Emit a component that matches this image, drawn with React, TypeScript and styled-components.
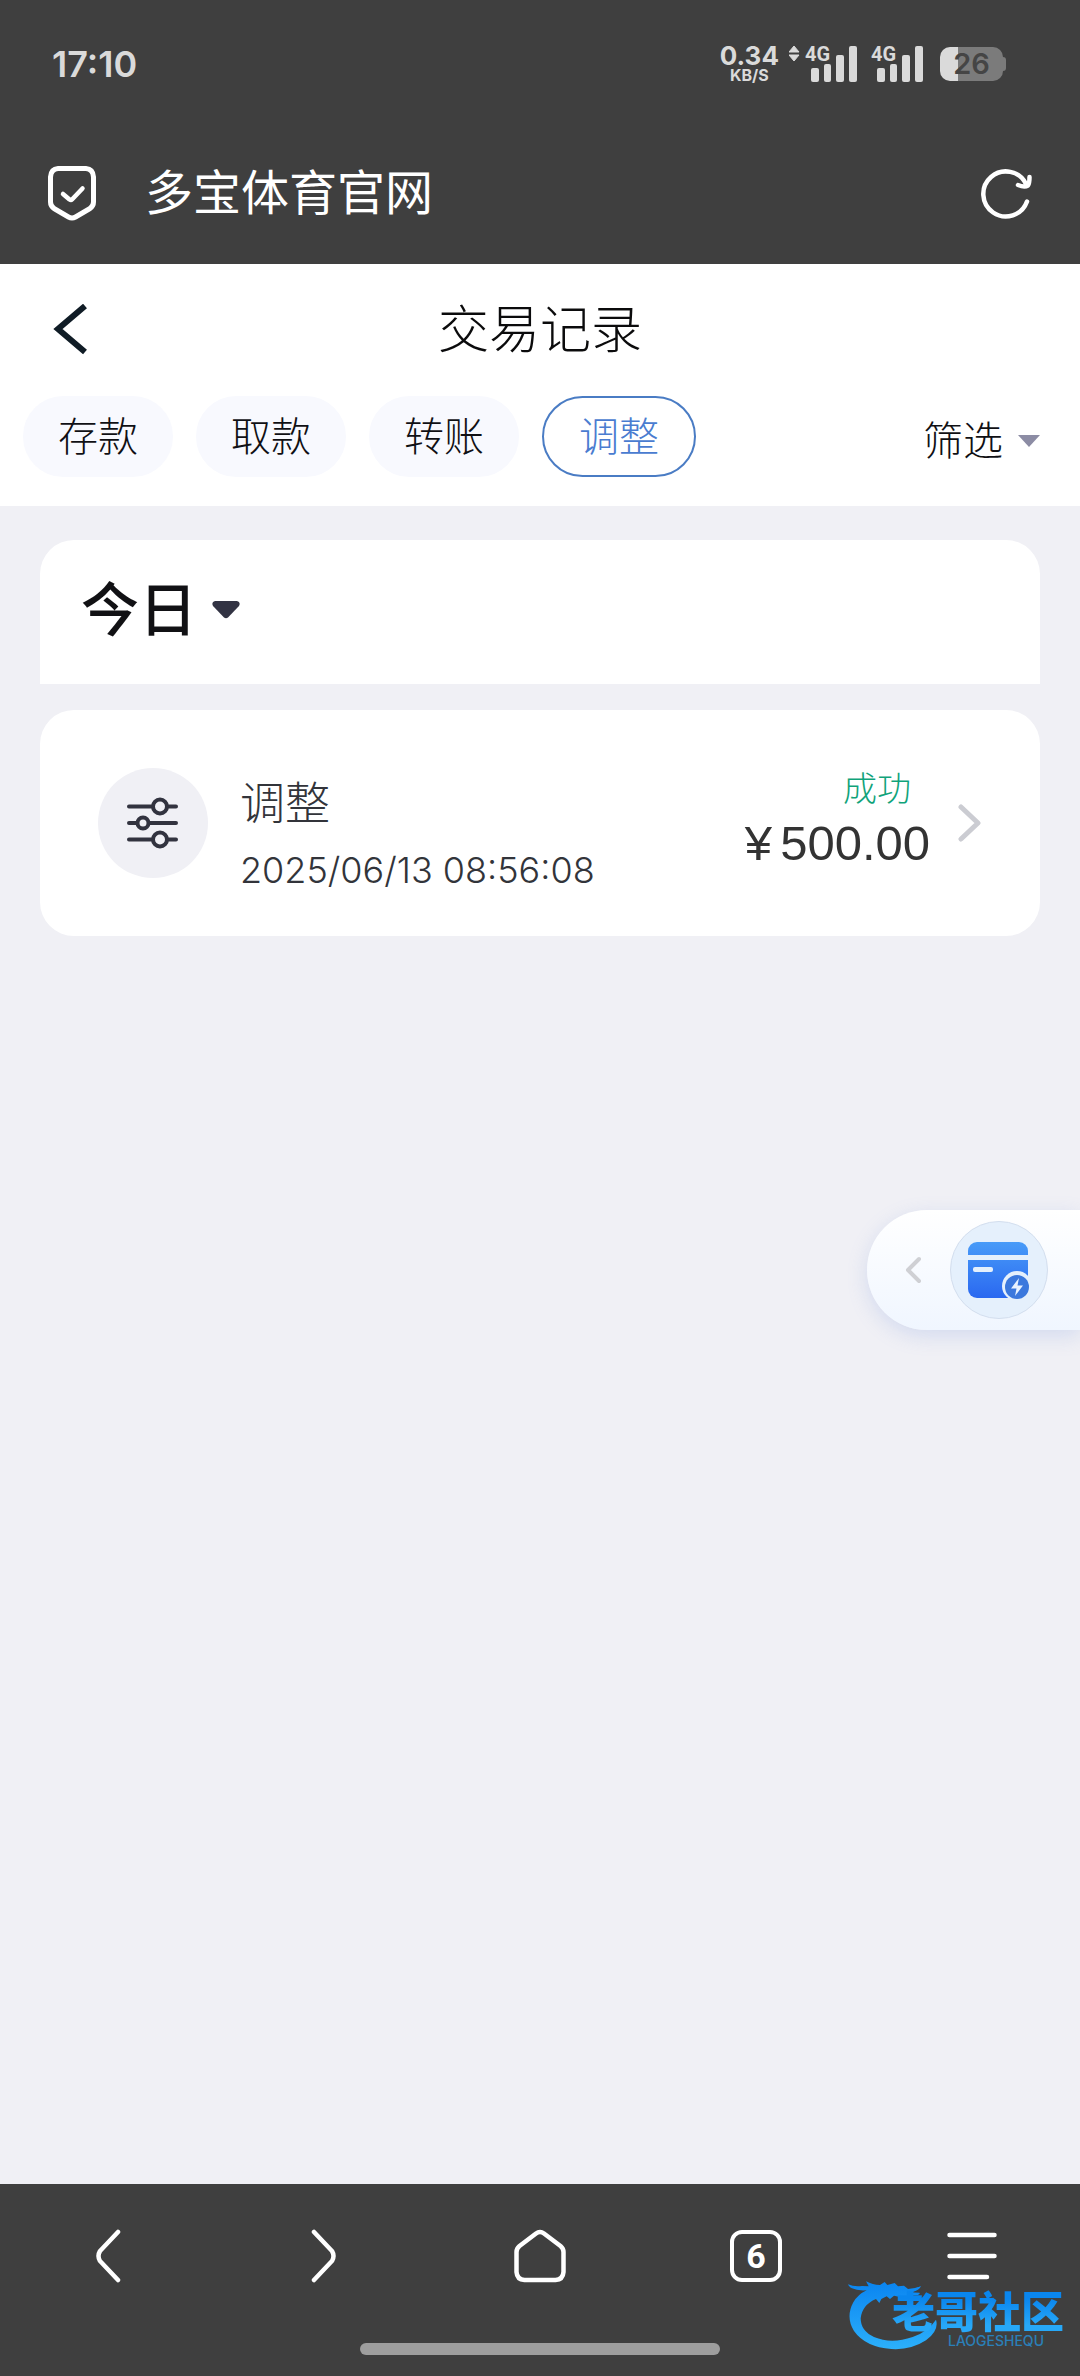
import React, { useState } from "react";
import styled, { createGlobalStyle } from "styled-components";

const GlobalStyle = createGlobalStyle`
  *, *::before, *::after { box-sizing: border-box; }
  body {
    margin: 0;
    background: #f0f0f5;
    font-family: Inter, "Noto Sans CJK SC", sans-serif;
  }
  button, select {
    margin: 0;
    padding: 0;
    border: 0;
    background: none;
    color: inherit;
    font: inherit;
    cursor: pointer;
  }
  svg { display: block; flex: none; }
  h1, h2, p { margin: 0; font-weight: inherit; }
`;

const Page = styled.div`
  position: relative;
  display: flex;
  flex-direction: column;
  min-height: 100vh;
`;

/* ---------- dark browser header ---------- */

const BrowserHeader = styled.header`
  background: #3f3f3f;
  color: #fff;
`;

const StatusBar = styled.div`
  display: flex;
  align-items: center;
  justify-content: space-between;
  height: 128px;
  padding: 0 74px 0 52px;
  color: #dadada;
`;

const Clock = styled.time`
  font-size: 36px;
  line-height: 40px;
  font-weight: 600;
`;

const StatusIcons = styled.div`
  display: flex;
  align-items: center;
  gap: 14px;
`;

const NetSpeed = styled.div`
  display: flex;
  flex-direction: column;
  align-items: center;
  margin-right: -4px;
  font-weight: 700;
`;

const SpeedValue = styled.span`
  font-size: 26px;
  line-height: 22px;
`;

const SpeedUnit = styled.span`
  font-size: 16px;
  line-height: 16px;
`;

const SignalGroup = styled.div`
  display: flex;
  align-items: flex-start;
  height: 38px;
`;

const SignalArt = styled.div`
  position: relative;
  width: 52px;
  height: 38px;
`;

const SignalLabel = styled.span`
  position: absolute;
  left: 0;
  top: 0;
  font-family: Roboto, sans-serif;
  font-size: 20px;
  line-height: 18px;
  font-weight: 700;
`;

const Battery = styled.div`
  position: relative;
  display: flex;
  align-items: center;
  justify-content: center;
  width: 63px;
  height: 34px;
  margin: 0 3px;
  border-radius: 10px;
  background: linear-gradient(90deg, #dadada 18px, #7b7b7b 18px);
  color: #454545;
  font-size: 29px;
  line-height: 34px;
  font-weight: 600;

  &::after {
    content: "";
    position: absolute;
    right: -3px;
    top: 10px;
    width: 3px;
    height: 14px;
    border-radius: 0 3px 3px 0;
    background: #7b7b7b;
  }
`;

const AddressBar = styled.div`
  display: flex;
  align-items: center;
  height: 136px;
  padding: 0 48px 6px 47px;
`;

const SiteTitle = styled.p`
  flex: 1;
  margin-left: 48px;
  font-size: 48px;
  line-height: 64px;
  font-weight: 400;
`;

const IconButton = styled.button`
  display: flex;
  align-items: center;
  justify-content: center;
`;

/* ---------- page header ---------- */

const PageHeader = styled.section`
  padding-bottom: 29px;
  background: #fff;
`;

const TitleRow = styled.div`
  display: grid;
  grid-template-columns: 160px 1fr 160px;
  align-items: center;
  height: 132px;
`;

const BackButton = styled(IconButton)`
  justify-content: flex-start;
  height: 80px;
  padding-left: 52px;
`;

const PageTitle = styled.h1`
  text-align: center;
  font-size: 51px;
  line-height: 72px;
  font-weight: 300;
  color: #0b0b0c;
`;

const FilterRow = styled.div`
  display: flex;
  align-items: center;
  gap: 23px;
  padding: 0 40px 0 23px;
`;

const Chip = styled.button<{ $active: boolean }>`
  height: 81px;
  padding: 0 ${(p) => (p.$active ? 35 : 33)}px;
  border: 2px solid ${(p) => (p.$active ? "#4a7cc4" : "#f8f9fe")};
  border-radius: 41px;
  background: ${(p) => (p.$active ? "#fff" : "#f8f9fe")};
  color: ${(p) => (p.$active ? "#4a7cd0" : "#101014")};
  font-size: 40px;
  line-height: 56px;
  font-weight: 300;
`;

const FilterButton = styled.button`
  display: flex;
  align-items: center;
  gap: 15px;
  margin-left: auto;
  padding-top: 8px;
  color: #101014;
  font-size: 40px;
  line-height: 56px;
  font-weight: 300;
`;

/* ---------- record list ---------- */

const Main = styled.main`
  display: flex;
  flex: 1;
  flex-direction: column;
  gap: 26px;
  padding: 34px 40px;
`;

const DayCard = styled.section`
  display: flex;
  align-items: flex-start;
  height: 144px;
  padding: 30px 41px;
  border-radius: 34px 34px 0 0;
  background: #fff;
`;

const DayPicker = styled.label`
  display: flex;
  align-items: center;
  gap: 14px;
`;

const DaySelect = styled.select`
  appearance: none;
  height: 80px;
  color: #111114;
  font-size: 58px;
  line-height: 80px;
  font-weight: 500;
`;

const RecordCard = styled.a`
  display: flex;
  align-items: center;
  height: 226px;
  padding: 0 58px;
  border-radius: 34px;
  background: #fff;
  color: #32343a;
  text-decoration: none;
`;

const RecordIcon = styled.span`
  display: flex;
  align-items: center;
  justify-content: center;
  width: 110px;
  height: 110px;
  border-radius: 50%;
  background: #f0f0f5;
`;

const RecordInfo = styled.div`
  display: flex;
  flex: 1;
  flex-direction: column;
  margin-left: 32px;
  padding-top: 22px;
`;

const RecordName = styled.h2`
  font-size: 45px;
  line-height: 72px;
  font-weight: 300;
`;

const RecordTime = styled.time`
  font-size: 36px;
  line-height: 60px;
  font-weight: 300;
`;

const RecordResult = styled.div`
  display: flex;
  flex-direction: column;
  align-items: flex-end;
  margin-right: 28px;
  padding-bottom: 8px;
`;

const Status = styled.span`
  padding-right: 19px;
  color: #10a37a;
  font-size: 34px;
  line-height: 48px;
  font-weight: 300;
`;

const Amount = styled.span`
  display: flex;
  gap: 8px;
  color: #333;
  font-family: "Liberation Sans", Arial, sans-serif;
  font-size: 49px;
  line-height: 60px;
`;

/* ---------- floating wallet handle ---------- */

const WalletTab = styled.button`
  position: absolute;
  right: 0;
  top: 1210px;
  display: flex;
  align-items: center;
  gap: 29px;
  height: 120px;
  padding: 0 32px 0 38px;
  border-radius: 60px 0 0 60px;
  background: linear-gradient(180deg, #fff, #f0f6ff);
  box-shadow: 0 6px 20px rgba(120, 150, 220, 0.24);
`;

const WalletDisc = styled.span`
  display: flex;
  align-items: center;
  justify-content: center;
  width: 98px;
  height: 98px;
  border: 1px solid #d3deee;
  border-radius: 50%;
  background: #e5f0fc;
`;

/* ---------- bottom bar ---------- */

const BottomBar = styled.footer`
  position: relative;
  height: 192px;
  background: #3f3f3f;
  color: #fff;
`;

const NavRow = styled.nav`
  display: grid;
  grid-template-columns: repeat(5, 1fr);
  height: 144px;
`;

const TabCount = styled.span`
  display: flex;
  align-items: center;
  justify-content: center;
  width: 52px;
  height: 52px;
  border: 4px solid #fff;
  border-radius: 12px;
  font-family: Roboto, sans-serif;
  font-size: 34px;
  line-height: 44px;
  font-weight: 700;
`;

const HomeHandle = styled.div`
  width: 33.333%;
  height: 12px;
  margin: 15px auto 0;
  border-radius: 6px;
  background: #9e9e9e;
`;

const Watermark = styled.div`
  position: absolute;
  right: 16px;
  bottom: 22px;
  display: flex;
  align-items: flex-end;
  pointer-events: none;
`;

const WatermarkText = styled.div`
  display: flex;
  flex-direction: column;
  align-items: flex-end;
  margin-left: -48px;
  padding-bottom: 6px;
`;

const WatermarkName = styled.span`
  background: linear-gradient(180deg, #0a86ee 20%, #27a8f8 80%);
  background-clip: text;
  -webkit-background-clip: text;
  color: transparent;
  font-size: 43px;
  line-height: 44px;
  font-weight: 900;
`;

const WatermarkLatin = styled.span`
  padding-right: 20px;
  color: #2b7fb8;
  font-size: 14px;
  line-height: 14px;
  font-weight: 500;
`;

function Signal() {
  return (
    <SignalArt>
      <SignalLabel>4G</SignalLabel>
      <svg width="52" height="38" viewBox="0 0 52 38" fill="#dadada" aria-hidden="true">
        <rect x="6" y="23" width="8" height="14" rx="2" />
        <rect x="19" y="19" width="7" height="18" rx="2" />
        <rect x="31" y="10" width="8" height="27" rx="2" />
        <rect x="44" y="1" width="8" height="36" rx="2" />
      </svg>
    </SignalArt>
  );
}

function DataArrows() {
  return (
    <svg width="16" height="18" viewBox="0 0 16 18" fill="#dadada" aria-hidden="true">
      <path d="M5 1 L10 7 H0 Z M5 16 L0 10 H10 Z" stroke="#dadada" strokeLinejoin="round" />
    </svg>
  );
}

function ShieldIcon() {
  return (
    <svg width="50" height="56" viewBox="0 0 50 56" fill="none" stroke="#fff" strokeWidth="5" strokeLinecap="round" strokeLinejoin="round" aria-hidden="true">
      <path d="M11 3.500 H39 Q46 4 46.500 12 V37 Q46.500 41 43 43.500 L28.500 52 Q25 54 21.500 52 L7 43.500 Q3.500 41 3.500 37 V12 Q4 4 11 3.500 Z" />
      <path d="M16 29 L22.500 34.500 Q24 35.500 25 34.500 L35.500 23.500" strokeWidth="4.500" />
    </svg>
  );
}

function RefreshIcon() {
  return (
    <svg width="52" height="52" viewBox="0 0 52 52" fill="none" stroke="#fff" strokeWidth="4.500" strokeLinecap="round" strokeLinejoin="round" aria-hidden="true">
      <path d="M47 34.500 A22.500 22.500 0 1 1 46 17" />
      <path d="M38 18 Q44.500 20.500 48 18.500 Q49.500 16.500 49.500 10" />
    </svg>
  );
}

function SlidersIcon() {
  return (
    <svg width="54" height="52" viewBox="0 0 54 52" fill="none" stroke="#32333f" strokeWidth="4" strokeLinecap="round" aria-hidden="true">
      <path d="M3 9.500 H26 M42 9.500 H50 M3 26 H10 M24 26 H50 M3 42.500 H26 M42 42.500 H50" />
      <circle cx="34" cy="9.500" r="7" />
      <circle cx="17" cy="26" r="5.500" />
      <circle cx="34" cy="42.500" r="7" />
    </svg>
  );
}

function WalletIcon() {
  return (
    <svg width="64" height="60" viewBox="0 0 64 60" aria-hidden="true">
      <defs>
        <linearGradient id="walletFill" x1="0" y1="0" x2="0" y2="1">
          <stop offset="0" stopColor="#489bf8" />
          <stop offset="1" stopColor="#2a68f0" />
        </linearGradient>
      </defs>
      <rect x="1" y="2" width="60" height="56" rx="9" fill="url(#walletFill)" />
      <rect x="0" y="15" width="62" height="5" fill="#e5f0fc" />
      <rect x="6" y="27" width="20" height="5" rx="2" fill="#e5f0fc" />
      <circle cx="50" cy="46" r="15" fill="#e5f0fc" />
      <circle cx="50" cy="47" r="12" fill="#3b78dd" />
      <path d="M52 38 L44 48.500 H49.500 L48 56 L56 45.500 H50.500 Z" fill="#e9f3ff" />
    </svg>
  );
}

function DragonMark() {
  return (
    <svg width="94" height="76" viewBox="60 55 282 228" aria-hidden="true">
      <defs>
        <linearGradient id="dragonFill" x1="0" y1="0" x2="0" y2="1">
          <stop offset="0" stopColor="#0a84f0" />
          <stop offset="1" stopColor="#2cb0fb" />
        </linearGradient>
      </defs>
      <path
        fill="url(#dragonFill)"
        d="M66 74 Q84 82 108 79 L128 80 L120 65 Q140 76 162 76 L176 67 L184 76 L206 70 L216 80 L234 78 L246 88 Q264 88 285 79 Q280 92 262 96 L250 98 L280 99 Q284 101 276 106 L242 106 L262 113 L232 114 L204 108 L192 118 L182 110 L166 118 L160 130 L150 118 Q108 136 104 176 Q104 214 144 232 Q196 254 260 232 Q306 216 330 180 Q340 212 300 242 Q254 272 196 268 Q118 262 84 214 Q58 172 82 128 Q96 104 122 92 Q94 94 78 86 Q68 82 66 74 Z"
      />
    </svg>
  );
}

const KINDS = ["存款", "取款", "转账", "调整"];

export default function App() {
  const [kind, setKind] = useState("调整");

  return (
    <Page>
      <GlobalStyle />
      <BrowserHeader>
        <StatusBar>
          <Clock>17:10</Clock>
          <StatusIcons>
            <NetSpeed>
              <SpeedValue>0.34</SpeedValue>
              <SpeedUnit>KB/S</SpeedUnit>
            </NetSpeed>
            <SignalGroup>
              <DataArrows />
              <Signal />
            </SignalGroup>
            <Signal />
            <Battery>26</Battery>
          </StatusIcons>
        </StatusBar>
        <AddressBar>
          <ShieldIcon />
          <SiteTitle>多宝体育官网</SiteTitle>
          <IconButton aria-label="刷新">
            <RefreshIcon />
          </IconButton>
        </AddressBar>
      </BrowserHeader>

      <PageHeader>
        <TitleRow>
          <BackButton aria-label="返回">
            <svg width="36" height="52" viewBox="0 0 36 52" fill="none" stroke="#101c26" strokeWidth="6" aria-hidden="true">
              <path d="M33 2 L6 25 L33 48" />
            </svg>
          </BackButton>
          <PageTitle>交易记录</PageTitle>
        </TitleRow>
        <FilterRow>
          {KINDS.map((name) => (
            <Chip key={name} $active={name === kind} aria-pressed={name === kind} onClick={() => setKind(name)}>
              {name}
            </Chip>
          ))}
          <FilterButton>
            筛选
            <svg width="22" height="12" viewBox="0 0 22 12" fill="#8c8ca4" aria-hidden="true">
              <path d="M0 0 H22 L11 12 Z" />
            </svg>
          </FilterButton>
        </FilterRow>
      </PageHeader>

      <Main>
        <DayCard>
          <DayPicker>
            <DaySelect aria-label="日期">
              <option>今日</option>
            </DaySelect>
            <svg width="28" height="18" viewBox="0 0 28 18" fill="#323343" aria-hidden="true">
              <path d="M3 0 H25 Q29 1 27 5 L16 16.500 Q14 18 12 16.500 L1 5 Q-1 1 3 0 Z" />
            </svg>
          </DayPicker>
        </DayCard>

        <RecordCard href="#record">
          <RecordIcon>
            <SlidersIcon />
          </RecordIcon>
          <RecordInfo>
            <RecordName>调整</RecordName>
            <RecordTime>2025/06/13 08:56:08</RecordTime>
          </RecordInfo>
          <RecordResult>
            <Status>成功</Status>
            <Amount>
              <span>¥</span>
              <span>500.00</span>
            </Amount>
          </RecordResult>
          <svg width="24" height="38" viewBox="0 0 24 38" fill="none" stroke="#cbccd2" strokeWidth="5" strokeLinecap="round" strokeLinejoin="round" aria-hidden="true">
            <path d="M3 3 L20 19 L3 35" />
          </svg>
        </RecordCard>
      </Main>

      <WalletTab aria-label="钱包">
        <svg width="16" height="28" viewBox="0 0 16 28" fill="none" stroke="#cfd0d4" strokeWidth="4" strokeLinecap="round" strokeLinejoin="round" aria-hidden="true">
          <path d="M14 3 L3 14 L14 25" />
        </svg>
        <WalletDisc>
          <WalletIcon />
        </WalletDisc>
      </WalletTab>

      <BottomBar>
        <NavRow>
          <IconButton aria-label="后退">
            <svg width="26" height="54" viewBox="0 0 26 54" fill="none" stroke="#fff" strokeWidth="4.500" strokeLinecap="round" aria-hidden="true">
              <path d="M23 3 L5 22 Q2 27 5 32 L23 51" />
            </svg>
          </IconButton>
          <IconButton aria-label="前进">
            <svg width="26" height="54" viewBox="0 0 26 54" fill="none" stroke="#fff" strokeWidth="4.500" strokeLinecap="round" aria-hidden="true">
              <path d="M3 3 L21 22 Q24 27 21 32 L3 51" />
            </svg>
          </IconButton>
          <IconButton aria-label="主页">
            <svg width="52" height="54" viewBox="0 0 52 54" fill="none" stroke="#fff" strokeWidth="4.500" strokeLinejoin="round" aria-hidden="true">
              <path d="M22 4.500 Q26 1.500 30 4.500 L46.500 17 Q49.500 19.500 49.500 23 V43 Q49 50.500 41.500 51 H10.500 Q3 50.500 2.500 43 V23 Q2.500 19.500 5.500 17 Z" />
            </svg>
          </IconButton>
          <IconButton aria-label="标签页">
            <TabCount>6</TabCount>
          </IconButton>
          <IconButton aria-label="菜单">
            <svg width="50" height="48" viewBox="0 0 50 48" fill="none" stroke="#fff" strokeWidth="4.500" strokeLinecap="round" aria-hidden="true">
              <path d="M2.500 3 H47.500 M2.500 24 H47.500 M2.500 45 H40" />
            </svg>
          </IconButton>
        </NavRow>
        <HomeHandle />
        <Watermark>
          <DragonMark />
          <WatermarkText>
            <WatermarkName>老哥社区</WatermarkName>
            <WatermarkLatin>LAOGESHEQU</WatermarkLatin>
          </WatermarkText>
        </Watermark>
      </BottomBar>
    </Page>
  );
}
